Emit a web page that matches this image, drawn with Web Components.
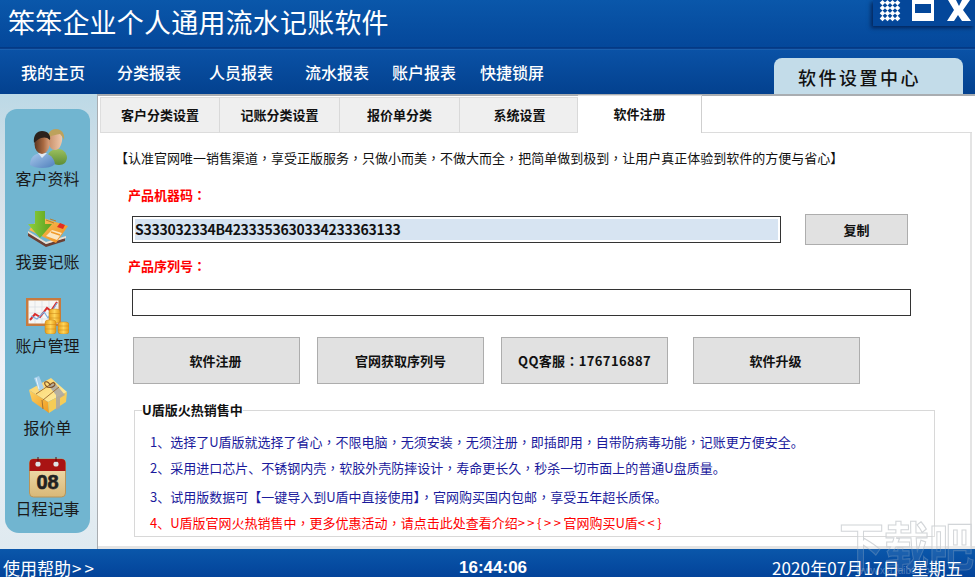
<!DOCTYPE html>
<html lang="zh"><head><meta charset="utf-8">
<style>
html,body{margin:0;padding:0;width:975px;height:577px;overflow:hidden;background:#fff}
body{font-family:"Noto Sans CJK SC","Liberation Sans",sans-serif}
app-shell{position:relative}
</style></head><body>
<app-shell>
 <app-header slot="header" title="笨笨企业个人通用流水记账软件"></app-header>
 <app-nav slot="nav"></app-nav>
 <side-bar slot="side">
  <side-item label="客户资料" icon="people" h="83"></side-item>
  <side-item label="我要记账" icon="card" h="84"></side-item>
  <side-item label="账户管理" icon="chart" h="82"></side-item>
  <side-item label="报价单" icon="box" h="81"></side-item>
  <side-item label="日程记事" icon="cal" h="83"></side-item>
 </side-bar>
 <reg-panel slot="main"></reg-panel>
 <app-footer slot="footer"></app-footer>
 <water-mark slot="mark"></water-mark>
</app-shell>
<script>
function def(name,html,init){
  customElements.define(name,class extends HTMLElement{
    constructor(){super();this.attachShadow({mode:'open'}).innerHTML=html;}
    connectedCallback(){if(init)init.call(this,this.shadowRoot);}
  });
}
def('app-shell',`<style>:host{display:flex;flex-direction:column;width:975px;height:577px;overflow:hidden}
.mid{display:flex;height:455px;flex:none}</style>
<slot name="header"></slot><slot name="nav"></slot>
<div class="mid"><slot name="side"></slot><slot name="main"></slot></div>
<slot name="footer"></slot><slot name="mark"></slot>`);

def('app-header',`<style>:host{display:block;height:48px;flex:none;position:relative;background:linear-gradient(#0a57aa,#04479a);color:#fff}
h1{margin:0;font:400 27px/27px "Noto Sans CJK SC",sans-serif;color:#fff;padding:8px 0 0 8px;letter-spacing:.2px;white-space:nowrap}
.ctl{position:absolute;right:0;top:0;width:102px;height:26px;background:#04479a;box-shadow:-2px 2px 4px rgba(0,0,30,.55);}
.ctl svg{position:absolute;left:0;top:0}</style>
<h1></h1>
<div class="ctl"><svg width="102" height="26" viewBox="0 0 102 26">
<g fill="#fff">
${[0,1,2,3].map(r=>[0,1,2,3].map(c=>`<path d="M${9.5+c*5} ${r*5.2}l2.800 2.800l-2.800 2.800l-2.800-2.800z"/>`).join('')).join('')}
<path fill-rule="evenodd" d="M39 0h22v21H39zM42 4v9h16V4z"/>
<path d="M75 0h8l3 6l3-6h8l-7 10l8 11h-9l-4-6l-4 6h-7l7-11z"/>
</g></svg></div>`,function(s){s.querySelector('h1').textContent=this.getAttribute('title');this.removeAttribute('title')});

def('app-nav',`<style>:host{display:block;height:46px;flex:none;position:relative;border-top:1px solid #0a3f8c;box-sizing:border-box;background:linear-gradient(#0a52a6,#03418f);box-shadow:inset 0 1px 0 #1a5fae,0 -1px 0 #033a85}
nav{display:flex;height:100%;align-items:center;font:500 16px/20px "Noto Sans CJK SC",sans-serif;color:#fff;padding:1px 0 0 21px;box-sizing:border-box}
span{white-space:nowrap}
.tab{position:absolute;left:774px;top:9px;width:189px;height:36px;border-radius:8px 8px 0 0;background:#c3dce9;color:#111;font:500 18px/38px "Noto Sans CJK SC",sans-serif;text-align:center;letter-spacing:2.500px;box-sizing:border-box;padding-right:18px}</style>
<nav><span>我的主页</span><span style="margin-left:32px">分类报表</span><span style="margin-left:28px">人员报表</span><span style="margin-left:32px">流水报表</span><span style="margin-left:23px">账户报表</span><span style="margin-left:24px">快捷锁屏</span></nav>
<div class="tab">软件设置中心</div>`);

def('side-bar',`<style>:host{display:block;width:98px;flex:none;box-sizing:border-box;padding:15px 7px 0 5px;background:linear-gradient(#bcd9e6 0,#d5e0e8 18%,#eef1f6 60%,#dfeaf0 100%);border-right:1px solid #a9adb1}
.p{background:#71b5d0;height:424px;width:85px;border-radius:12px 12px 14px 14px;display:flex;flex-direction:column;padding-top:18px;box-sizing:border-box}</style>
<div class="p"><slot></slot></div>`);

const ICONS={
people:`<svg style="margin-top:2px" width="38" height="39" viewBox="0 0 38 39"><defs>
<linearGradient id="pf" x1="0" x2="1"><stop offset="0" stop-color="#5a3520"/><stop offset=".6" stop-color="#a96a42"/><stop offset="1" stop-color="#d9a27e"/></linearGradient>
<linearGradient id="pb" x1="0" y1="0" x2="1" y2="1"><stop offset="0" stop-color="#a9c9ec"/><stop offset="1" stop-color="#4f7fbc"/></linearGradient>
<linearGradient id="pg" x1="0" y1="0" x2="0" y2="1"><stop offset="0" stop-color="#9cc05e"/><stop offset="1" stop-color="#5d8d36"/></linearGradient>
<linearGradient id="pr" x1="0" x2="1"><stop offset="0" stop-color="#c68d68"/><stop offset="1" stop-color="#f1c9ab"/></linearGradient></defs>
<path d="M19 26c1-4 6-6 10-6c5 0 8 3 9 8c0 5-3 8-8 8c-6 0-10-4-11-10z" fill="url(#pg)"/>
<path d="M19 11c0-6 4-9 8-9c4 0 7 4 6 10c-1 5-3 9-7 9s-7-5-7-10z" fill="url(#pr)"/>
<path d="M18 14c-1-8 3-14 9-14c6 0 9 5 8 11c-1-3-3-5-4-6c-4 1-8 1-10 3c-1 2-2 4-3 6z" fill="#bda25c"/>
<path d="M1 36c0-7 4-12 12-12c8 0 12 5 13 11c-3 3-8 4-13 4c-5 0-9-1-12-3z" fill="url(#pb)"/>
<path d="M9 24l4 5l5-5z" fill="#dfeaf5"/>
<ellipse cx="13" cy="15" rx="7.500" ry="10" fill="url(#pf)"/>
<path d="M5 14c-1-8 3-12 8-12c6 0 9 4 8 9c-3-3-6-3-9-2c-3 1-5 3-7 5z" fill="#2b221c"/></svg>`,
card:`<svg style="margin-top:0" width="42" height="38" viewBox="0 0 42 38"><defs>
<linearGradient id="ca" x1="0" y1="0" x2="1" y2="0"><stop offset="0" stop-color="#8fd13e"/><stop offset="1" stop-color="#5ba01f"/></linearGradient>
<linearGradient id="co" x1="0" y1="0" x2="1" y2="1"><stop offset="0" stop-color="#f8cc63"/><stop offset="1" stop-color="#ef8a1c"/></linearGradient></defs>
<path d="M1 22l18 12l19-6v3l-19 6L1 26z" fill="#6b4034"/><path d="M1 21l18 11l20-6v2l-20 6L1 23z" fill="#eadfd2"/>
<path d="M13 7l28 9l-12 17L2 20z" fill="url(#co)"/><path d="M19 10l8 3M23 9l6 2" stroke="#b9812c" stroke-width="1"/><path d="M33 13l5 2l-2 4l-6-2z" fill="#e32c21"/><path d="M25 20l10 3l-5 7l-11-4z" fill="#fbe6c2"/><path d="M24 22l9 3" stroke="#f09a2a" stroke-width="1.500"/>
<path d="M8 1h10v13h7L13 28L1 14h7z" fill="url(#ca)"/></svg>`,
chart:`<svg style="margin-top:4px" width="43" height="36" viewBox="0 0 43 36"><defs><linearGradient id="gd" x1="0" x2="1"><stop offset="0" stop-color="#e79d1a"/><stop offset=".5" stop-color="#ffd65a"/><stop offset="1" stop-color="#e59a16"/></linearGradient></defs>
<rect x="0" y="0" width="35" height="28" fill="#c77a3f"/><rect x="2.500" y="2.500" width="30" height="23" fill="#f7f7f5"/><path d="M3 9h29M3 15h29M3 21h29M9 3v22M16 3v22M23 3v22" stroke="#d5d9de" stroke-width=".6"/>
<path d="M4 22l5-6l5 3l7-9l4 3l6-9" fill="none" stroke="#d92c2c" stroke-width="2"/><path d="M5 18l6 3l7-7l4 6l9-15" fill="none" stroke="#7aaee0" stroke-width="1.200"/>
<g fill="url(#gd)" stroke="#c9851a" stroke-width=".5"><rect x="23" y="11" width="11" height="14" rx="3"/><path d="M23 15.500h11M23 20h11"/><rect x="19" y="22" width="11" height="14" rx="3"/><path d="M19 26.500h11M19 31h11"/><rect x="32" y="24" width="11" height="12" rx="3"/><path d="M32 28h11M32 32h11"/></g></svg>`,
box:`<svg style="margin-top:-1px" width="38" height="38" viewBox="0 0 38 38"><defs><linearGradient id="bt" x1="0" y1="0" x2="1" y2="1"><stop offset="0" stop-color="#fbcf62"/><stop offset="1" stop-color="#fff0a6"/></linearGradient><linearGradient id="bl" x1="0" y1="0" x2="1" y2="1"><stop offset="0" stop-color="#fcd264"/><stop offset="1" stop-color="#f19a1e"/></linearGradient></defs>
<path d="M0 15L22 3l16 14l-19 10z" fill="url(#bt)"/><path d="M0 15l19 12l1 11L3 26z" fill="url(#bl)"/><path d="M19 27l19-10l-1 10L20 38z" fill="#f5cc58"/>
<path d="M22 10l10 12l-5 3v10l-4 2V22L15 12z" fill="#a8a6a3" opacity=".85" transform="translate(4 -2)"/>
<path d="M7 19l18-12M13 25l1 9M14 25L30 12" stroke="#9c6a2c" stroke-width=".9" fill="none"/>
<path d="M5 3l5-2l5 12l-5 3z" fill="#a7d0ec"/><path d="M7 3l3 11" stroke="#e8f4fb" stroke-width="1"/>
<path d="M17 11c-4-5 2-6 4-1c2-4 7-2 4 1c-2 2-6 2-8 0z" fill="none" stroke="#7b4d24" stroke-width="1.100"/></svg>`,
cal:`<svg style="margin-top:0" width="37" height="41" viewBox="0 0 37 41"><defs><linearGradient id="g5" x1="0" y1="0" y2="1" x2="0"><stop offset="0" stop-color="#f4e3b8"/><stop offset="1" stop-color="#d9b877"/></linearGradient></defs><rect x="0.500" y="2" width="36" height="38" rx="4" fill="url(#g5)" stroke="#b89459"/><path d="M0.500 14V6a4 4 0 0 1 4-4h28a4 4 0 0 1 4 4v8z" fill="#a91313"/><circle cx="9" cy="7" r="2.600" fill="#dfe3e6"/><circle cx="27" cy="7" r="2.600" fill="#dfe3e6"/><path d="M9 0v5M27 0v5" stroke="#5a0a0a" stroke-width="1"/>
<text x="18.500" y="32" text-anchor="middle" font-family="Liberation Sans,sans-serif" font-weight="700" font-size="20" fill="#222" stroke="#222" stroke-width=".6">08</text></svg>`};
def('side-item',`<style>:host{display:flex;flex-direction:column;align-items:center;flex:none;box-sizing:border-box}
.i{height:42px;display:flex;align-items:flex-start;justify-content:center}
.i svg{display:block}
.t{font:400 16px/20px "Noto Sans CJK SC",sans-serif;color:#1a1a1a;margin-top:-1px;white-space:nowrap}</style>
<div class="i"></div><div class="t"></div>`,function(s){this.style.height=this.getAttribute('h')+'px';s.querySelector('.i').innerHTML=ICONS[this.getAttribute('icon')];s.querySelector('.t').textContent=this.getAttribute('label')});

const P=t=>t.replace(/[，：]/g,m=>`<u lang="zh-TW">${m}</u>`);
def('reg-panel',`<style>:host{display:block;flex:1;min-width:0;background:#fff;border-top:2px solid #a9adb1;box-sizing:border-box;padding:1px 3px 0 2px;border-bottom:3px solid #e4e4e4;font:400 13px/18px "Noto Sans CJK SC",sans-serif;color:#111}
u{text-decoration:none;font-family:"Noto Sans CJK TC",sans-serif}
.tabs{display:flex;height:36px;position:relative}
.tabs div{width:120px;flex:none;background:#efefef;border-top:1px solid #dedede;border-right:1px solid #d9d9d9;border-bottom:1px solid #dcdcdc;box-sizing:border-box;font-weight:700;line-height:33px;text-align:center;height:36px;color:#111}
.tabs div:first-child{border-left:1px solid #dedede}
.tabs div:nth-child(4){width:118px;padding-left:2px}
.tabs div.on{background:#fff;border-left:0;border-right:1px solid #cfcfcf;border-bottom:0;width:124px;line-height:36px;margin-top:-2px;height:38px;padding:0}
.tabs i{flex:1;border-bottom:1px solid #dcdcdc}
.body{border-right:2px solid #e4e4e4;height:413px;padding:14px 0 0 18px;box-sizing:border-box}
.note{white-space:nowrap;height:24px;line-height:22px;margin-left:-3px}
.lab{color:#f00;font-weight:700;margin:14px 0 0 10px;height:20px;line-height:20px}
.row{display:flex;margin:0 0 0 14px}
.inp{height:27px;box-sizing:border-box;border:1px solid #333;background:#fff;font:700 14px/21px "Noto Sans CJK SC","Liberation Sans",sans-serif;padding:2px;color:#111;white-space:nowrap}
.inp span{display:block;height:21px;background:#d7e4f2;letter-spacing:-.27px}
.btn{display:flex;align-items:center;justify-content:center;box-sizing:border-box;background:#e1e1e1;border:1px solid #adadad;font-weight:700;color:#111;height:47px;white-space:nowrap}
fieldset{border:1px solid #d8d8d8;padding:0 0 0 15px;width:801px;height:135px;box-sizing:border-box;margin:18px 0 0 16px;position:relative}
legend{font-weight:700;padding:0;margin-left:-8px;line-height:16px;color:#111;font-size:13px}
p{margin:0;white-space:nowrap;line-height:20px;color:#1a1a9c}
.sp{letter-spacing:2.500px}</style>
<div class="tabs"><div>客户分类设置</div><div>记账分类设置</div><div>报价单分类</div><div>系统设置</div><div class="on">软件注册</div><i></i></div>
<div class="body">
 <div class="note">${P('【认准官网唯一销售渠道，享受正版服务，只做小而美，不做大而全，把简单做到极到，让用户真正体验到软件的方便与省心】')}</div>
 <div class="lab">${P('产品机器码：')}</div>
 <div class="row" style="margin-top:9px;align-items:center"><div class="inp" style="width:649px"><span>S333032334B4233353630334233363133</span></div><div class="btn" style="width:103px;height:31px;margin-left:24px">复制</div></div>
 <div class="lab" style="margin-top:11px">${P('产品序列号：')}</div>
 <div class="row" style="margin-top:13px"><div class="inp" style="width:779px"></div></div>
 <div class="row" style="margin-top:21px;margin-left:15px">
  <div class="btn" style="width:167px;padding-right:2px">软件注册</div><div class="btn" style="width:167px;margin-left:17px">官网获取序列号</div><div class="btn" style="width:167px;margin-left:17px"><span style="letter-spacing:.35px">${P('QQ客服：176716887')}</span></div><div class="btn" style="width:167px;margin-left:25px;padding-right:2px">软件升级</div>
 </div>
 <fieldset><legend>U盾版火热销售中</legend>
  <p style="margin-top:14px">${P('1、选择了U盾版就选择了省心，不限电脑，无须安装，无须注册，即插即用，自带防病毒功能，记账更方便安全。')}</p>
  <p style="margin-top:6px">${P('2、采用进口芯片、不锈钢内壳，软胶外壳防摔设计，寿命更长久，秒杀一切市面上的普通U盘质量。')}</p>
  <p style="margin-top:9px">${P('3、试用版数据可【一键导入到U盾中直接使用】，官网购买国内包邮，享受五年超长质保。')}</p>
  <p style="margin-top:6px;color:#f00">${P('4、U盾版官网火热销售中，更多优惠活动，请点击此处查看介绍')}<span class="sp">&gt;&gt;{&gt;&gt;</span>官网购买U盾<span class="sp">&lt;&lt;}</span></p>
 </fieldset>
</div>`);

def('app-footer',`<style>:host{display:flex;height:28px;flex:none;background:linear-gradient(#0a57aa,#03439a);color:#fff;align-items:flex-start;font:400 17px/18px "Noto Sans CJK SC",sans-serif;white-space:nowrap;position:relative;overflow:hidden;padding-top:10px;box-sizing:border-box}
.l{padding-left:3px;width:456px;box-sizing:border-box;flex:none}
.l b{font-weight:400;letter-spacing:3px;margin-left:1px}
.c{font:700 17px/18px "Liberation Sans",sans-serif;width:316px;padding-left:3px;box-sizing:border-box;flex:none}
.r{letter-spacing:.1px}
.r i{font-style:normal;margin-left:12px}</style>
<span class="l">使用帮助<b>&gt;&gt;</b></span><span class="c">16:44:06</span><span class="r">2020年07月17日<i>星期五</i></span>`);

def('water-mark',`<style>:host{display:block;position:absolute;left:0;top:0;pointer-events:none}
.w{position:absolute;left:839px;top:510px;font:700 45px/60px "Noto Sans CJK SC",sans-serif;color:rgba(255,255,255,.25);-webkit-text-stroke:1px rgba(205,208,212,.9);white-space:nowrap;transform:scaleY(1.15);transform-origin:0 0;-webkit-mask-image:linear-gradient(#000 0,#000 34px,rgba(0,0,0,.3) 34px);mask-image:linear-gradient(#000 0,#000 34px,rgba(0,0,0,.3) 34px)}
.u{position:absolute;left:856px;top:566px;font:400 10px/10px "Liberation Sans",sans-serif;color:rgba(210,220,235,.35);white-space:nowrap}</style>
<div class="w">下载吧</div><div class="u">www.xiazaiba.com</div>`);
</script>
</body></html>
